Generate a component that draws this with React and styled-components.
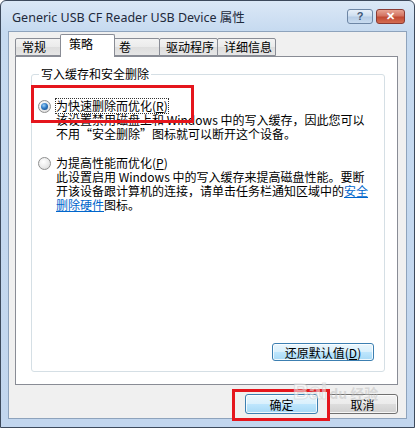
import React from "react";
import styled, { createGlobalStyle } from "styled-components";

const GlobalStyle = createGlobalStyle`
  html, body {
    margin: 0;
    padding: 0;
    background: #ffffff;
  }
  body {
    font-family: "Noto Sans CJK SC", "Noto Sans", sans-serif;
  }
`;

const cjk = `"Noto Sans CJK SC", "Noto Sans", sans-serif`;

const Window = styled.div`
  position: relative;
  width: 415px;
  height: 428px;
  box-sizing: border-box;
  border: 1px solid #3d4a5c;
  border-radius: 6px 6px 0 0;
  background: linear-gradient(180deg, #dbe8f6 0px, #c6daf0 30px, #c2d6ee 100%);
  display: flex;
  flex-direction: column;
  overflow: hidden;
`;

const TitleBar = styled.div`
  height: 30px;
  display: flex;
  align-items: flex-start;
  padding: 0 9px 0 11px;
  box-sizing: border-box;
`;

const Title = styled.div`
  flex: 1;
  margin-top: 8px;
  font-family: "Noto Sans", "Noto Sans CJK SC", sans-serif;
  font-size: 12.5px;
  line-height: 17px;
  color: #1e2a3c;
  white-space: nowrap;
`;

const CaptionButtons = styled.div`
  display: flex;
  gap: 3px;
  margin-top: 8px;
`;

const CaptionButton = styled.div`
  width: ${(p) => p.$w}px;
  height: 15px;
  box-sizing: border-box;
  border: 1px solid ${(p) => (p.$close ? "#8a3b34" : "#6d86a5")};
  border-radius: 3px;
  background: ${(p) =>
    p.$close
      ? "linear-gradient(180deg, #e8a493 0%, #d37462 45%, #c14a33 55%, #d46d52 100%)"
      : "linear-gradient(180deg, #e8f0f9 0%, #cfdff0 45%, #b7cde6 55%, #c9dcf0 100%)"};
  display: flex;
  align-items: center;
  justify-content: center;
  color: ${(p) => (p.$close ? "#ffffff" : "#3f5878")};
  font-family: "Liberation Sans", sans-serif;
  font-weight: bold;
  font-size: 11px;
  line-height: 1;
`;

const Client = styled.div`
  flex: 1;
  margin: 0 7px 8px 7px;
  border: 1px solid #8ea3bc;
  background: #f0f0f0;
  display: flex;
  flex-direction: column;
  padding: 2px 8px 0 6px;
`;

const TabRow = styled.div`
  display: flex;
  align-items: flex-end;
  height: 22px;
  padding-left: 1px;
  position: relative;
  z-index: 1;
`;

const Tab = styled.div`
  width: ${(p) => p.$w}px;
  height: ${(p) => (p.$active ? 23 : 18)}px;
  box-sizing: border-box;
  border: 1px solid #898c95;
  border-bottom: ${(p) => (p.$active ? "none" : "1px solid #898c95")};
  margin: ${(p) => (p.$active ? "0 -2px -1px -2px" : "0 0 0 -1px")};
  position: relative;
  z-index: ${(p) => (p.$active ? 2 : 1)};
  background: ${(p) =>
    p.$active
      ? "#ffffff"
      : "linear-gradient(180deg, #f3f3f3 0%, #ebebeb 50%, #dedede 51%, #e6e6e6 100%)"};
  border-radius: 2px 2px 0 0;
  padding-left: ${(p) => (p.$active ? 8 : 6)}px;
  font-family: ${cjk};
  font-size: 12px;
  line-height: ${(p) => (p.$active ? 18 : 16)}px;
  color: #000;
  white-space: nowrap;
`;

const Panel = styled.div`
  height: 329px;
  box-sizing: border-box;
  border: 1px solid #898c95;
  background: #ffffff;
  padding: 17px 12px 12px 15px;
  display: flex;
  flex-direction: column;
`;

const Group = styled.div`
  flex: 1;
  border: 1px solid #d5dfe5;
  border-radius: 3px;
  padding: 0 10px 10px 6px;
  display: flex;
  flex-direction: column;
`;

const Legend = styled.div`
  align-self: flex-start;
  margin: -8px 0 0 1px;
  padding: 0 2px;
  background: #ffffff;
  font-family: ${cjk};
  font-size: 12px;
  line-height: 14px;
  color: #000;
`;

const Option = styled.div`
  display: flex;
  flex-direction: column;
  margin-top: ${(p) => p.$top || 0}px;
`;

const OptionHead = styled.div`
  display: flex;
  align-items: center;
  gap: 5px;
`;

const Radio = styled.span`
  width: 13px;
  height: 13px;
  box-sizing: border-box;
  border-radius: 50%;
  border: 1px solid #8e8f8f;
  background: radial-gradient(circle at 40% 35%, #ffffff 0%, #eeeeee 45%, #d4d4d4 100%);
  display: flex;
  align-items: center;
  justify-content: center;
  flex: none;

  &::after {
    content: "";
    display: ${(p) => (p.$checked ? "block" : "none")};
    width: 7px;
    height: 7px;
    border-radius: 50%;
    background: radial-gradient(circle at 40% 35%, #9fd1f7 0%, #2f7bc5 45%, #0c3e78 100%);
  }
`;

const OptionLabel = styled.span`
  font-family: ${cjk};
  font-size: 12px;
  line-height: 14px;
  color: #000;
  white-space: nowrap;
  outline: ${(p) => (p.$focus ? "1px dotted #333" : "none")};
  outline-offset: 0;
`;

const Desc = styled.div`
  margin-left: 18px;
  font-family: ${cjk};
  font-size: 12px;
  line-height: 14px;
  color: #000;
`;

const Line = styled.div`
  white-space: nowrap;
`;

const Link = styled.span`
  color: #0066cc;
  text-decoration: underline;
`;

const Spacer = styled.div`
  flex: 1;
`;

const ButtonRow = styled.div`
  display: flex;
  justify-content: flex-end;
  gap: ${(p) => p.$gap || 0}px;
  padding: ${(p) => p.$pad || "0"};
`;

const Button = styled.div`
  width: ${(p) => p.$w}px;
  height: ${(p) => p.$h}px;
  box-sizing: border-box;
  border: 1px solid ${(p) => (p.$blue ? "#3c7fb1" : "#707070")};
  border-radius: 3px;
  box-shadow: inset 0 0 0 1px rgba(255, 255, 255, 0.8);
  background: ${(p) =>
    p.$blue
      ? "linear-gradient(180deg, #eaf6fd 0%, #d9f0fc 50%, #bee6fd 51%, #a7d9f5 100%)"
      : "linear-gradient(180deg, #f2f2f2 0%, #ebebeb 50%, #dddddd 51%, #cfcfcf 100%)"};
  display: flex;
  align-items: center;
  justify-content: center;
  font-family: ${cjk};
  font-size: 12px;
  color: #000;
  white-space: nowrap;
`;

const Highlight = styled.div`
  position: absolute;
  left: ${(p) => p.$x}px;
  top: ${(p) => p.$y}px;
  width: ${(p) => p.$w}px;
  height: ${(p) => p.$h}px;
  box-sizing: border-box;
  border: 3px solid #e5161d;
  pointer-events: none;
`;

const Watermark = styled.div`
  position: absolute;
  left: 292px;
  top: 378px;
  display: flex;
  align-items: baseline;
  gap: 2px;
  font-family: "Liberation Sans", sans-serif;
  font-weight: bold;
  font-size: 22px;
  color: rgba(255, 255, 255, 0.5);
  -webkit-text-stroke: 1px rgba(200, 200, 200, 0.5);
  pointer-events: none;

  small {
    font-size: 14px;
    font-family: ${cjk};
    -webkit-text-stroke: 0;
    color: rgba(190, 190, 190, 0.5);
  }
`;

const tabs = [
  { label: "常规", w: 47 },
  { label: "策略", w: 55, active: true },
  { label: "卷", w: 48 },
  { label: "驱动程序", w: 59 },
  { label: "详细信息", w: 59 },
];

export default function App() {
  return (
    <>
      <GlobalStyle />
      <Window>
        <TitleBar>
          <Title>Generic USB CF Reader USB Device 属性</Title>
          <CaptionButtons>
            <CaptionButton $w={26}>?</CaptionButton>
            <CaptionButton $w={29} $close>
              ✕
            </CaptionButton>
          </CaptionButtons>
        </TitleBar>
        <Client>
          <TabRow>
            {tabs.map((t) => (
              <Tab key={t.label} $w={t.w} $active={t.active}>
                {t.label}
              </Tab>
            ))}
          </TabRow>
          <Panel>
            <Group>
              <Legend>写入缓存和安全删除</Legend>
              <Option $top={18}>
                <OptionHead>
                  <Radio $checked />
                  <OptionLabel $focus>
                    为快速删除而优化(<u>R</u>)
                  </OptionLabel>
                </OptionHead>
                <Desc>
                  <Line>该设置禁用磁盘上和 Windows 中的写入缓存，因此您可以</Line>
                  <Line>不用“安全删除”图标就可以断开这个设备。</Line>
                </Desc>
              </Option>
              <Option $top={15}>
                <OptionHead>
                  <Radio />
                  <OptionLabel>
                    为提高性能而优化(<u>P</u>)
                  </OptionLabel>
                </OptionHead>
                <Desc>
                  <Line>此设置启用 Windows 中的写入缓存来提高磁盘性能。要断</Line>
                  <Line>
                    开该设备跟计算机的连接，请单击任务栏通知区域中的<Link>安全</Link>
                  </Line>
                  <Line>
                    <Link>删除硬件</Link>图标。
                  </Line>
                </Desc>
              </Option>
              <Spacer />
              <ButtonRow>
                <Button $w={102} $h={18} $blue>
                  还原默认值(<u>D</u>)
                </Button>
              </ButtonRow>
            </Group>
          </Panel>
          <ButtonRow $gap={9} $pad="9px 0 0 0">
            <Button $w={73} $h={20} $blue>
              确定
            </Button>
            <Button $w={71} $h={20}>
              取消
            </Button>
          </ButtonRow>
        </Client>
        <Highlight $x={30} $y={84} $w={163} $h={38} />
        <Highlight $x={231} $y={388} $w={98} $h={32} />
        <Watermark>
          Bai<small>du 经验</small>
        </Watermark>
      </Window>
    </>
  );
}
